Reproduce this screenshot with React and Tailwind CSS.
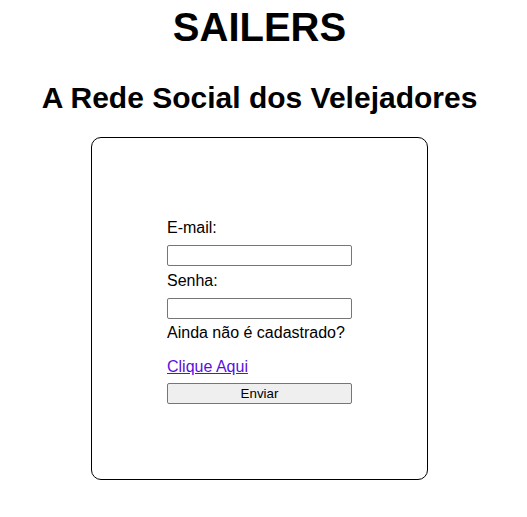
export default function App() {
    return (
        <div className="w-[519px] font-['Liberation_Sans',Arial,sans-serif] text-black">
            <h1 className="mt-[4px] text-center text-[40px] font-bold leading-[46px]">SAILERS</h1>
            <h2 className="mt-[31px] text-center text-[30px] font-bold leading-[34px]">A Rede Social dos Velejadores</h2>

            <div className="mx-auto mt-[22px] flex h-[343px] w-[337px] flex-col items-center rounded-[10px] border border-black pt-[81px]">
                <form className="flex w-[185px] flex-col text-[16px] leading-[18px]" onSubmit={(e) => e.preventDefault()}>
                    <label htmlFor="email" className="block">E-mail:</label>
                    <input
                        id="email"
                        type="email"
                        className="mt-[8px] h-[21px] w-full rounded-[2px] border border-[#767676] bg-white px-[2px] text-[13px]"
                    />
                    <label htmlFor="senha" className="mt-[6px] block">Senha:</label>
                    <input
                        id="senha"
                        type="password"
                        className="mt-[8px] h-[21px] w-full rounded-[2px] border border-[#767676] bg-white px-[2px] text-[13px]"
                    />
                    <p className="mt-[5px]">Ainda não é cadastrado?</p>
                    <a href="#" className="mt-[16px] self-start text-[#5a0fe0] underline">Clique Aqui</a>
                    <button
                        type="submit"
                        className="mt-[7px] h-[21px] w-full rounded-[2px] border border-[#767676] bg-[#efefef] text-[13.33px] leading-[15px]"
                    >
                        Enviar
                    </button>
                </form>
            </div>
        </div>
    );
}
